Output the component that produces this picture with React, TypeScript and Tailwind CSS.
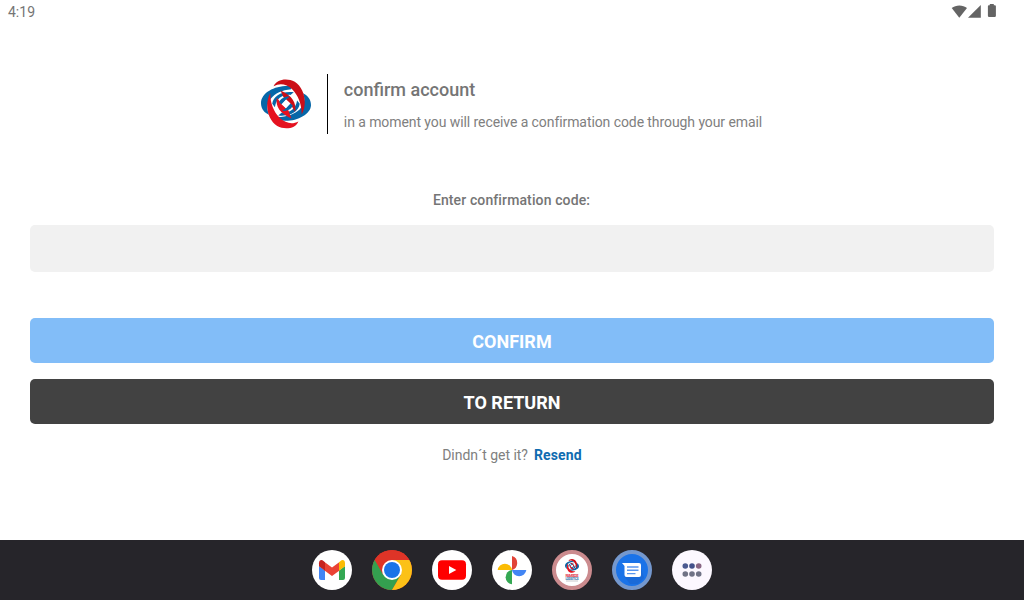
import type { ReactNode } from 'react'

function Swirl({ className }: { className?: string }) {
  return (
    <svg className={className} viewBox="9 7 151 151">
      <path d="M100 29C56 25 10 46 9 80C9 97 20 110 34 115C16 82 44 42 100 38Z" fill="#0667a8" />
      <path d="M58 130C103 142 159 118 160 86C160 68 149 56 135 50C153 84 118 122 58 122Z" fill="#0667a8" />
      <path d="M37 50C19 82 28 130 58 149C82 162 114 156 122 135C103 145 84 141 66 125C47 106 37 80 37 50Z" fill="#e51220" />
      <path d="M132 114C150 82 141 34 111 15C87 2 55 8 47 29C66 18 86 22 103 38C122 57 132 84 132 114Z" fill="#cb0e17" />
      <path d="M43 82C46 58 72 43 108 47L98 55C72 54 56 66 51 92Z" fill="#0667a8" />
      <path d="M126 82C123 106 97 121 61 117L71 109C97 110 113 98 118 72Z" fill="#0667a8" />
      <path d="M57 64C52 90 66 112 101 126L92 102L73 84Z" fill="#e51220" />
      <path d="M112 106C117 80 103 57 68 42L77 62L96 80Z" fill="#cb0e17" />
      <path d="M64 77C68 66 80 60 96 60L85 69L72 84Z" fill="#0667a8" />
      <path d="M105 87C101 98 89 104 73 104L84 95L97 80Z" fill="#0667a8" />
      <path d="M85 69L98 81L84 95L71 83Z" fill="#fff" />
    </svg>
  )
}

function DockIcon({ children, className = 'bg-white' }: { children: ReactNode; className?: string }) {
  return (
    <button
      className={`flex size-10 items-center justify-center overflow-hidden rounded-full ${className}`}
    >
      {children}
    </button>
  )
}

function StatusBar() {
  return (
    <div className="flex h-6 items-center justify-between pl-2 pr-7 text-[#757575]">
      <span className="text-sm">4:19</span>
      <svg className="h-6 w-[46px]" fill="#646464" viewBox="0 0 46 24">
        <path d="M1.700 8C5.800 4.600 13 4.600 17 8L9.300 17.700Z" />
        <path d="M18 17.800L30.800 5V17.800Z" />
        <path d="M39.800 4h4v1.300h1.100a1 1 0 0 1 1 1v9.500a1.200 1.200 0 0 1-1.200 1.200h-5.600a1.200 1.200 0 0 1-1.200-1.200V6.300a1 1 0 0 1 1-1h.9z" />
      </svg>
    </div>
  )
}

function Dock() {
  return (
    <nav className="flex h-[60px] items-center justify-center gap-5 bg-[#26252a]">
      <DockIcon>
        <svg className="size-10" viewBox="0 0 40 40">
          <path d="M7 16L13 20.500V30H9a2 2 0 0 1-2-2Z" fill="#4285f4" />
          <path d="M33 16L27 20.500V30h4a2 2 0 0 0 2-2Z" fill="#34a853" />
          <path d="M12.500 12L20 17.600L27.500 12V20.500L20 26L12.500 20.500Z" fill="#ea4335" />
          <path d="M27 12.300V20.800L33 16.200V13.300C33 10 30.500 9.300 28.500 11Z" fill="#fbbc04" />
          <path d="M13 12.300V20.800L7 16.200V13.300C7 10 9.500 9.300 11.500 11Z" fill="#c5221f" />
        </svg>
      </DockIcon>
      <DockIcon className="bg-[#de3427]">
        <svg className="size-10" viewBox="0 0 40 40">
          <path d="M20 20L28.700 25L20 40H0V5.300L2.700 10Z" fill="#34a04f" />
          <path d="M20 20L11.300 25L0 5.300V0H40V10H20Z" fill="#de3427" />
          <path d="M20 10H40V40H20L28.700 25Z" fill="#fcc117" />
          <circle cx="20" cy="20" fill="#fff" r="10" />
          <circle cx="20" cy="20" fill="#1a73e8" r="8" />
        </svg>
      </DockIcon>
      <DockIcon>
        <svg className="size-10" viewBox="0 0 40 40">
          <rect fill="#f00" height="19.500" rx="4" width="28" x="6" y="10.300" />
          <path d="M17 16L24.300 20L17 24Z" fill="#fff" />
        </svg>
      </DockIcon>
      <DockIcon>
        <svg className="size-10" viewBox="0 0 40 40">
          <path d="M20 20V6A7.300 7.300 0 0 1 20 20Z" fill="#e14337" />
          <path d="M20 20H34.300A7.200 7.200 0 0 1 20 20Z" fill="#4285f4" />
          <path d="M20 20V34.300A7.200 7.200 0 0 1 20 20Z" fill="#34a853" />
          <path d="M20 20H5.700A7.200 7.200 0 0 1 20 20Z" fill="#fbbc04" />
        </svg>
      </DockIcon>
      <DockIcon className="border-4 border-[#cb8b8e] bg-white">
        <div className="flex flex-col items-center font-bold">
          <Swirl className="size-[14px]" />
          <svg className="h-[9px] w-[18px]" viewBox="0 0 18 9">
            <text fill="#dc3048" fontSize="4" textAnchor="middle" textLength="13" x="9" y="4">
              FAMSOS
            </text>
            <text fill="#286ca8" fontSize="3" textAnchor="middle" textLength="13" x="9" y="6.600">
              LOGISTICS
            </text>
            <path d="M3 8H15" stroke="#a4a4aa" strokeWidth=".6" />
          </svg>
        </div>
      </DockIcon>
      <DockIcon className="border-4 border-[#7498ce] bg-[#1a73e8]">
        <svg className="size-8" viewBox="0 0 32 32">
          <path d="M24 11L28 24L22 30H14L8 22Z" fill="#1a6ad8" />
          <path d="M6 9H23a2 2 0 0 1 2 2v10a2 2 0 0 1-2 2H10.500a2 2 0 0 1-2-2V12Z" fill="#fff" />
          <path d="M11 13H22.500M11 16.300H22.500M11 19.600H19.500" stroke="#5996ef" strokeWidth="1.400" />
        </svg>
      </DockIcon>
      <DockIcon className="bg-[#fcf8ff]">
        <svg className="size-10" viewBox="0 0 40 40">
          <circle cx="13.300" cy="16" fill="#4b5a91" r="2.800" />
          <circle cx="20" cy="16" fill="#43518b" r="2.800" />
          <circle cx="26.700" cy="16" fill="#896684" r="2.800" />
          <circle cx="13.300" cy="24" fill="#707386" r="2.800" />
          <circle cx="20" cy="24" fill="#707386" r="2.800" />
          <circle cx="26.700" cy="24" fill="#707386" r="2.800" />
        </svg>
      </DockIcon>
    </nav>
  )
}

export default function App() {
  return (
    <div className="flex h-screen flex-col bg-white font-[Roboto,sans-serif] text-[#808080]">
      <StatusBar />
      <main className="flex flex-1 flex-col px-[30px] pt-[50px]">
        <header className="flex h-[60px] items-center self-center pr-px">
          <Swirl className="size-[50px]" />
          <div className="ml-4 h-full w-px bg-black" />
          <div className="ml-4 flex flex-col gap-3 pt-1">
            <h1 className="text-lg/5 font-medium text-[#757575]">confirm account</h1>
            <p className="text-sm/5 tracking-[-0.08px]">
              in a moment you will receive a confirmation code through your email
            </p>
          </div>
        </header>
        <label
          className="mt-14 pr-px text-center text-sm/5 font-medium tracking-[0.12px] text-[#757575]"
          htmlFor="code"
        >
          Enter confirmation code:
        </label>
        <input
          className="mt-[15px] h-[47px] rounded-[5px] bg-[#f1f1f1] px-4 outline-none"
          id="code"
        />
        <button className="mt-[46px] h-[45px] rounded-[5px] bg-[#82bdf8] pt-0.5 text-lg font-bold text-white">
          CONFIRM
        </button>
        <button className="mt-4 h-[45px] rounded-[5px] bg-[#424242] pt-0.5 text-lg font-bold text-white">
          TO RETURN
        </button>
        <p className="mt-[21px] flex justify-center gap-1.5 text-sm/5 tracking-[-0.04px]">
          Dindn´t get it?
          <a className="font-bold tracking-[0.15px] text-[#0f6bb0]" href="#">
            Resend
          </a>
        </p>
      </main>
      <Dock />
    </div>
  )
}
